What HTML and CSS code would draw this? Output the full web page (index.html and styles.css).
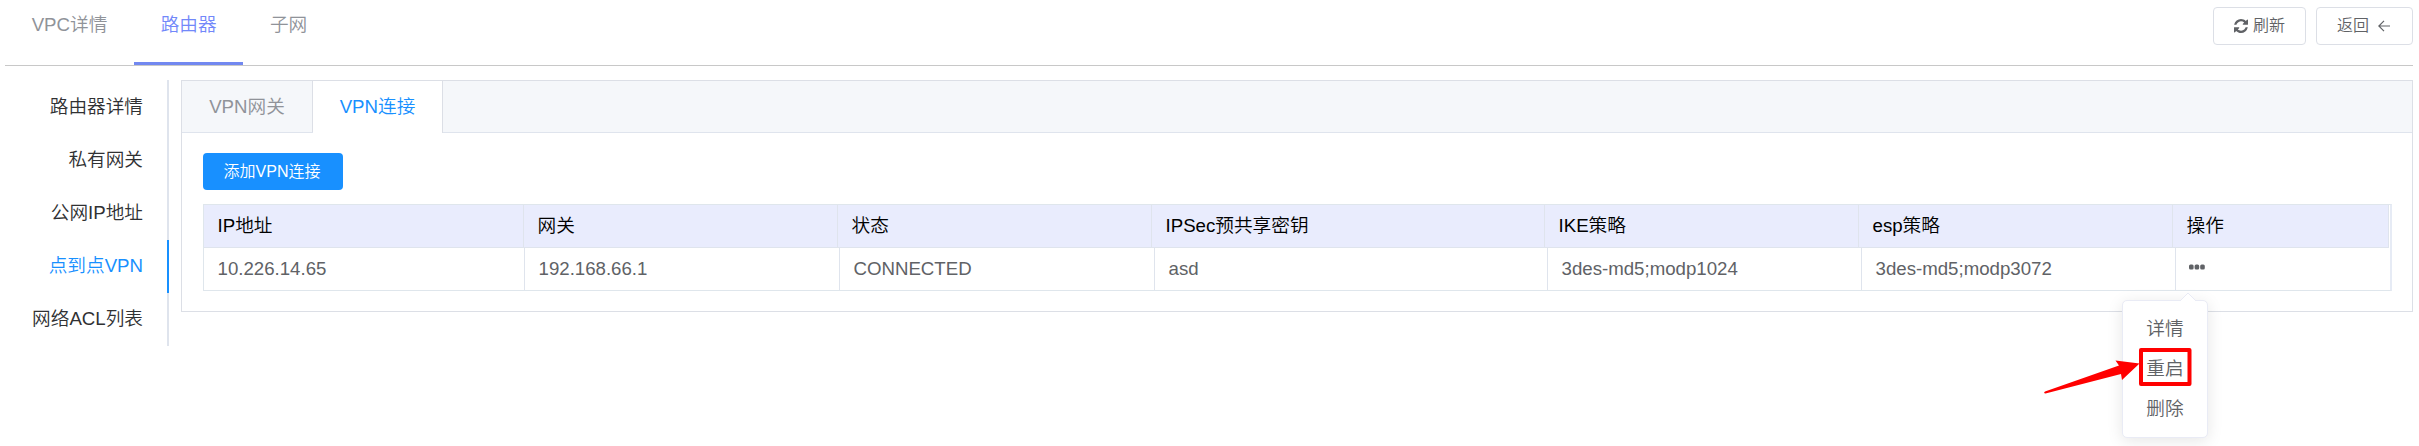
FILE: index.html
```html
<!DOCTYPE html>
<html lang="zh-CN">
<head>
<meta charset="utf-8">
<title>VPC</title>
<link rel="stylesheet" href="styles.css">
</head>
<body>
<header class="topbar">
  <nav class="tabs">
    <a class="tab">VPC详情</a>
    <a class="tab active">路由器</a>
    <a class="tab">子网</a>
  </nav>
  <div class="actions">
    <button class="btn refresh">
      <svg width="14" height="14" viewBox="0 0 1536 1536" fill="currentColor"><path d="M1511 928q0 5-1 7-64 268-268 434.500T764 1536q-146 0-282.500-55T238 1324l-129 129q-19 19-45 19t-45-19-19-45V960q0-26 19-45t45-19h448q26 0 45 19t19 45-19 45l-137 137q71 66 161 102t187 36q134 0 250-65t186-179q11-17 53-117 8-23 30-23h192q13 0 22.500 9.500t9.500 22.500zm25-800v448q0 26-19 45t-45 19h-448q-26 0-45-19t-19-45 19-45l138-138Q969 256 768 256q-134 0-250 65T332 500q-11 17-53 117-8 23-30 23H50q-13 0-22.500-9.500T18 608v-7q65-268 270-434.500T768 0q146 0 284 55.500T1297 212l130-129q19-19 45-19t45 19 19 45z"/></svg>
      <span>刷新</span>
    </button>
    <button class="btn back">
      <span>返回</span>
      <svg width="12" height="12" viewBox="0 0 12 12" fill="none" stroke="currentColor" stroke-width="1.200"><path d="M12 6H1M6 .8L.8 6 6 11.200"/></svg>
    </button>
  </div>
</header>
<main class="content">
  <aside class="side">
    <a class="item">路由器详情</a>
    <a class="item">私有网关</a>
    <a class="item">公网IP地址</a>
    <a class="item active">点到点VPN</a>
    <a class="item">网络ACL列表</a>
  </aside>
  <section class="panel">
    <nav class="subtabs">
      <a class="subtab">VPN网关</a>
      <a class="subtab active">VPN连接</a>
    </nav>
    <div class="body">
      <button class="add">添加VPN连接</button>
      <div class="table">
        <div class="row head">
          <div>IP地址</div><div>网关</div><div>状态</div><div>IPSec预共享密钥</div><div>IKE策略</div><div>esp策略</div><div>操作</div>
        </div>
        <div class="row data">
          <div>10.226.14.65</div><div>192.168.66.1</div><div>CONNECTED</div><div>asd</div><div>3des-md5;modp1024</div><div>3des-md5;modp3072</div>
          <div><svg class="dots" width="16" height="6" viewBox="0 0 16 6" fill="currentColor"><rect x="0" y=".5" width="4.600" height="5" rx="1.500"/><rect x="5.600" y=".5" width="4.600" height="5" rx="1.500"/><rect x="11.200" y=".5" width="4.600" height="5" rx="1.500"/></svg></div>
        </div>
      </div>
    </div>
  </section>
</main>
<div class="menu">
  <svg class="caret" width="16" height="9" viewBox="0 0 16 9"><path d="M0 9L8 1l8 8" fill="#fff" stroke="#e9ebf5"/></svg>
  <a>详情</a>
  <a>重启</a>
  <a>删除</a>
</div>
<svg class="callout" width="150" height="50" viewBox="2043 342 150 50">
  <rect x="2141" y="350" width="48.500" height="34" fill="none" stroke="#f00" stroke-width="4" stroke-linejoin="round"/>
  <path d="M2045 391.500L2119 365.500 2115.500 360.500 2139.500 363.500 2122 380 2121 374 2045.500 393.500Q2043 393 2045 391.500z" fill="#f00"/>
</svg>
</body>
</html>
```
FILE: styles.css
```css
* { box-sizing: border-box; }
body {
  margin: 0;
  width: 2419px;
  height: 446px;
  overflow: hidden;
  background: #fff;
  color: #606266;
  font: 350 18.67px/24px "Liberation Sans", "Noto Sans CJK SC", sans-serif;
}
button { font: inherit; margin: 0; }
.topbar {
  display: flex;
  justify-content: space-between;
  align-items: flex-start;
  height: 66px;
  margin: 0 6px 0 5px;
  border-bottom: 1px solid #c8c8c8;
}
.tabs { display: flex; height: 65px; }
.tab { padding: 13px 26.67px 0; color: #909399; }
.tab.active { color: #7288fa; border-bottom: 3px solid #7288f0; }
.actions { display: flex; gap: 10px; padding-top: 7px; }
.btn {
  display: flex;
  align-items: center;
  height: 38px;
  padding: 0 20px;
  border: 1px solid #dcdfe6;
  border-radius: 4px;
  background: #fff;
  color: #606266;
  font-size: 16px;
}
.refresh { width: 93px; gap: 5px; }
.back { width: 97px; gap: 9px; }
.content { display: flex; align-items: flex-start; margin-top: 14px; padding-right: 6px; }
.side { flex: none; width: 169px; }
.item {
  display: flex;
  align-items: center;
  justify-content: flex-end;
  height: 53.2px;
  padding-right: 24px;
  border-right: 2px solid #dfe4ed;
  color: #303133;
}
.item.active { color: #1890ff; border-color: #1890ff; }
.panel { flex: 1; min-width: 0; height: 232px; margin-left: 12px; border: 1px solid #dcdfe6; }
.subtabs { display: flex; height: 52px; background: #f5f7fa; border-bottom: 1px solid #dfe4ed; }
.subtab { width: 130px; height: 52px; padding-top: 14px; text-align: center; color: #909399; }
.subtab:first-child { width: 131px; height: 51px; border-right: 1px solid #dcdfe6; }
.subtab.active { background: #fff; color: #1890ff; border-right: 1px solid #dcdfe6; }
.body { padding: 20px 21px; }
.add {
  display: block;
  width: 140px;
  height: 37px;
  padding: 0 2px 0 0;
  border: 0;
  border-radius: 4px;
  background: #1890ff;
  color: #fff;
  font-size: 16px;
}
.table { width: 2189px; margin-top: 14px; border: 1px solid #dfe6ec; border-right: 2px solid #e6ebf5; }
.row { display: grid; }
.row > div { padding-left: 13.5px; border-right: 1px solid #dfe4ed; }
.head { height: 43px; grid-template-columns: 320px 314px 314px 393px 314px 314px 216px; color: #000; }
.head > div { padding-top: 9px; background: #e9ecfd; border-bottom: 1px solid #dfe4ed; }
.data { height: 42px; grid-template-columns: 321px 315px 315px 393px 314px 314px 214px; }
.data > div { padding-top: 9px; }
.data > div:last-child { padding-left: 12.5px; border-right: 0; }
.dots { display: block; margin-top: 7px; }
.menu {
  position: absolute;
  left: 2122px;
  top: 300px;
  width: 86px;
  height: 138px;
  padding: 8px 0;
  border: 1px solid #e9ebf5;
  border-radius: 5px;
  background: #fff;
  text-align: center;
  box-shadow: 0 3px 16px rgba(0, 0, 0, .1);
}
.menu a { display: block; line-height: 40px; }
.caret { position: absolute; left: 57px; top: -9px; }
.callout { position: absolute; left: 2043px; top: 342px; overflow: visible; }
```
